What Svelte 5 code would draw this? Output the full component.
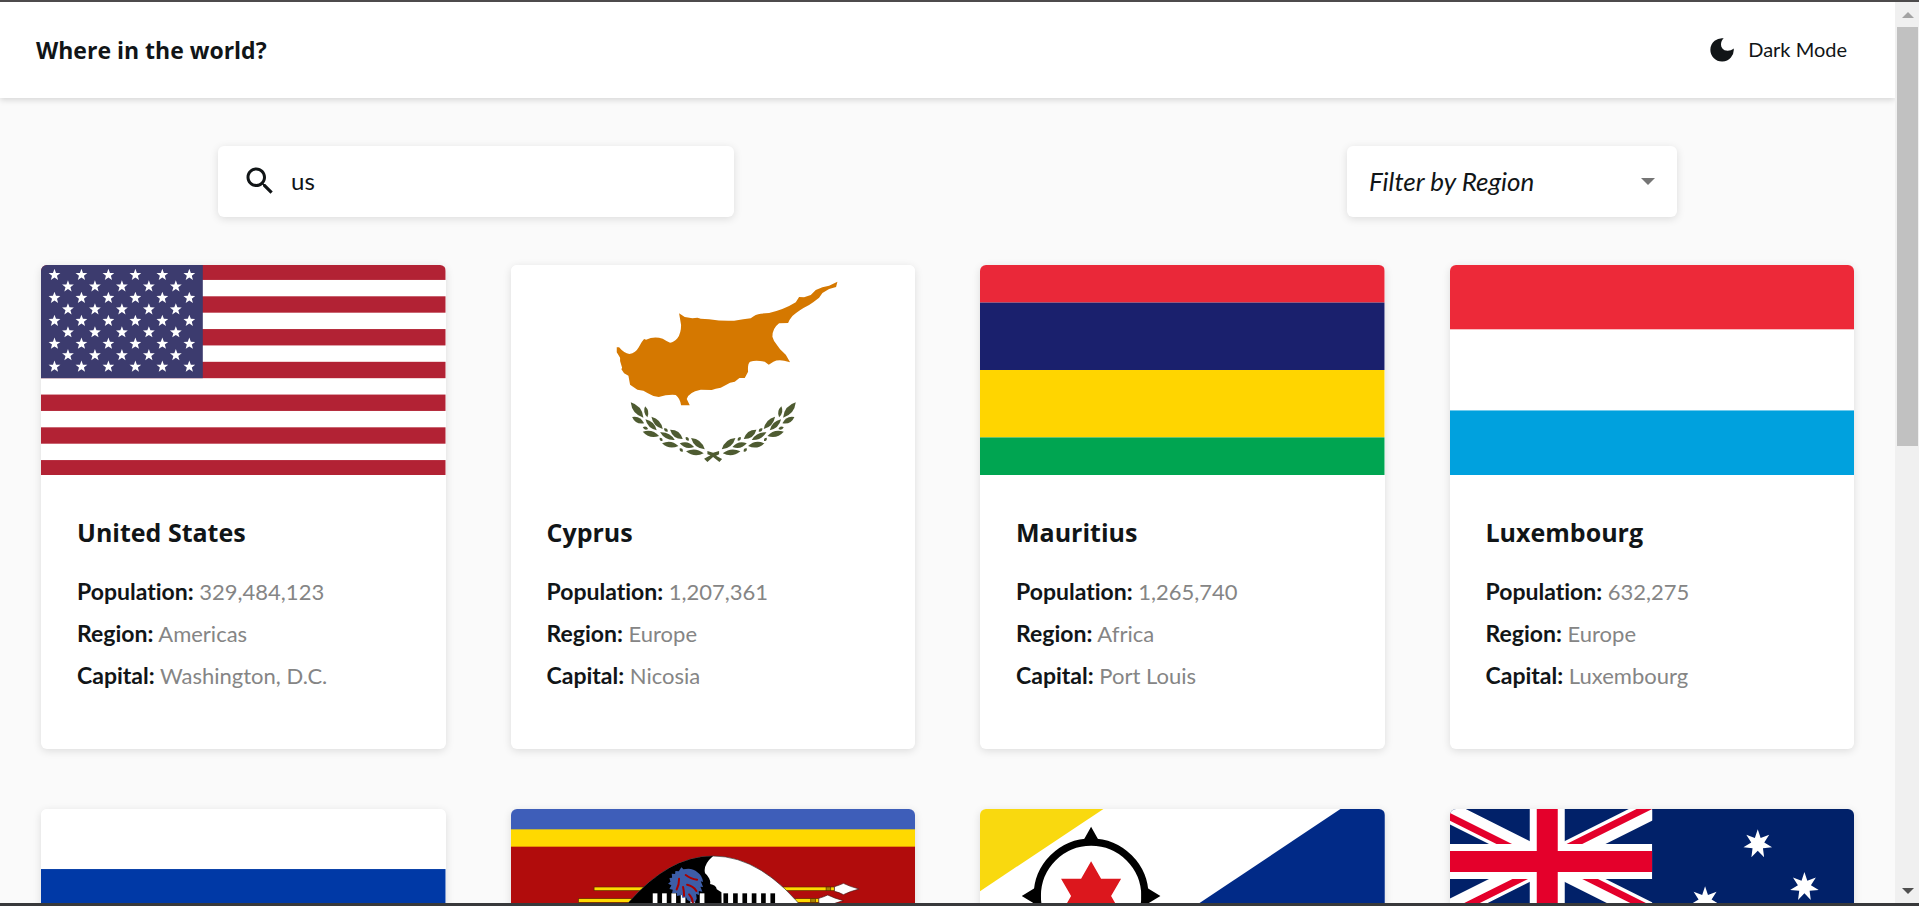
<script>
  let query = $state('us');
  let region = $state('');

  const regions = ['Africa', 'Americas', 'Asia', 'Europe', 'Oceania'];

  const countries = [
    { code: 'us', name: 'United States', details: { population: 329484123, region: 'Americas', capital: 'Washington, D.C.' } },
    { code: 'cy', name: 'Cyprus', details: { population: 1207361, region: 'Europe', capital: 'Nicosia' } },
    { code: 'mu', name: 'Mauritius', details: { population: 1265740, region: 'Africa', capital: 'Port Louis' } },
    { code: 'lu', name: 'Luxembourg', details: { population: 632275, region: 'Europe', capital: 'Luxembourg' } },
    { code: 'ru', name: 'Russia' },
    { code: 'sz', name: 'Eswatini' },
    { code: 'bq', name: 'Caribbean Netherlands' },
    { code: 'au', name: 'Australia' }
  ];

  // Points of a regular star with its first tip straight up.
  function star(cx, cy, outer, inner, tips) {
    const points = [];
    for (let i = 0; i < tips * 2; i++) {
      const r = i % 2 ? inner : outer;
      const a = (Math.PI * i) / tips - Math.PI / 2;
      points.push(`${(cx + r * Math.cos(a)).toFixed(2)},${(cy + r * Math.sin(a)).toFixed(2)}`);
    }
    return points.join(' ');
  }

  // Lens-shaped leaf from one tip to the other.
  function leaf([x1, y1, x2, y2, w]) {
    const len = Math.hypot(x2 - x1, y2 - y1);
    const nx = (-(y2 - y1) / len) * w;
    const ny = ((x2 - x1) / len) * w;
    const mx = (x1 + x2) / 2;
    const my = (y1 + y2) / 2;
    return `M${x1} ${y1}Q${mx + nx} ${my + ny} ${x2} ${y2}Q${mx - nx} ${my - ny} ${x1} ${y1}Z`;
  }

  const usStars = [];
  for (let row = 0; row < 9; row++) {
    const odd = row % 2;
    for (let col = 0; col < (odd ? 5 : 6); col++) {
      usStars.push(star(13.5 + col * 27 + odd * 13.5, 11.48 * (row + 1), 6.2, 2.6, 5));
    }
  }

  const leaves = [
    [390, 442, 428, 488, 20], [394, 486, 430, 505, 16], [433, 454, 440, 487, 12],
    [434, 493, 468, 526, 15], [452, 485, 486, 522, 16], [426, 530, 475, 543, 17],
    [426, 517, 442, 522, 9], [490, 520, 501, 530, 9], [478, 532, 522, 555, 15],
    [508, 524, 546, 552, 18], [477, 548, 485, 558, 8], [484, 565, 533, 573, 17],
    [555, 546, 564, 557, 9], [537, 565, 580, 576, 16], [571, 549, 612, 583, 18],
    [537, 580, 546, 590, 9], [556, 589, 609, 595, 17]
  ];
</script>

{#snippet flag(code)}
  {#if code === 'us'}
    <svg class="flag" viewBox="0 0 405 213.16" preserveAspectRatio="xMidYMid slice" role="img" aria-label="Flag of United States">
      <rect width="405" height="213.16" fill="#fff" />
      {#each [0, 1, 2, 3, 4, 5, 6] as i}
        <rect y={i * 32.794} width="405" height="16.397" fill="#b22234" />
      {/each}
      <rect width="162" height="114.78" fill="#3c3b6e" />
      {#each usStars as points}<polygon {points} fill="#fff" />{/each}
    </svg>
  {:else if code === 'cy'}
    <svg class="flag" viewBox="30 30 1215 630" preserveAspectRatio="xMidYMid slice" role="img" aria-label="Flag of Cyprus">
      <rect x="30" y="30" width="1215" height="630" fill="#fff" />
      <path fill="#d57800" d="M348 277L355 277Q370 295 386 297Q405 294 414 277Q422 260 430 252L436 254Q460 242 486 251Q500 260 508 263Q520 262 530 250Q541 235 541 210L535 175L552 186L575 190L590 188L600 191L625 193Q665 199 700 197Q730 193 750 190Q765 177 780 176L805 174Q850 164 885 142L895 126L910 127L930 120L945 105L965 97L985 92L1010 80L1006 96L985 102L965 114L955 128Q940 140 925 150Q895 165 875 183Q865 195 862 204L835 205Q815 220 815 245L820 258L838 283L855 299L868 322L850 317Q830 314 818 320L804 329L792 320Q765 315 748 320Q740 326 742 350L732 369L716 369L702 380L688 383L660 398L645 401L633 405L600 404Q562 412 558 432L567 451L541 451Q538 430 525 420Q500 418 474 426Q455 424 440 414L428 407L410 404L388 389L383 362L370 355L362 343L364 338L358 318L358 308L348 292Z" />
      <g fill="#4e5b31">
        {#each leaves as l}<path d={leaf(l)} />{/each}
        <g transform="translate(1275 0) scale(-1 1)">
          {#each leaves as l}<path d={leaf(l)} />{/each}
        </g>
        <path d="M620 588L637 593L655 588L655 598L646 602L664 612L656 621L637 606L620 621L610 611L629 601L620 598Z" />
      </g>
    </svg>
  {:else if code === 'mu'}
    <svg class="flag" viewBox="0 0 6 4" preserveAspectRatio="xMidYMid slice" role="img" aria-label="Flag of Mauritius">
      <rect width="6" height="1" fill="#ea2839" />
      <rect y="1" width="6" height="1" fill="#1a206d" />
      <rect y="2" width="6" height="1" fill="#ffd500" />
      <rect y="3" width="6" height="1" fill="#00a551" />
    </svg>
  {:else if code === 'lu'}
    <svg class="flag" viewBox="0 0 5 3" preserveAspectRatio="xMidYMid slice" role="img" aria-label="Flag of Luxembourg">
      <rect width="5" height="1" fill="#ed2939" />
      <rect y="1" width="5" height="1" fill="#fff" />
      <rect y="2" width="5" height="1" fill="#00a1de" />
    </svg>
  {:else if code === 'ru'}
    <svg class="flag" viewBox="0 0 9 6" preserveAspectRatio="xMidYMid slice" role="img" aria-label="Flag of Russia">
      <rect width="9" height="2" fill="#fff" />
      <rect y="2" width="9" height="2" fill="#0039a6" />
      <rect y="4" width="9" height="2" fill="#d52b1e" />
    </svg>
  {:else if code === 'sz'}
    <svg class="flag" viewBox="30 57 1215 630" preserveAspectRatio="xMidYMid slice" role="img" aria-label="Flag of Eswatini">
      <rect x="30" y="57" width="1215" height="630" fill="#3e5eb9" />
      <rect x="30" y="118" width="1215" height="508" fill="#ffd900" />
      <rect x="30" y="170" width="1215" height="404" fill="#b10c0c" />
      <g fill="#ffd900" stroke="#5a2a00" stroke-width="2">
        <rect x="280" y="291" width="722" height="11" />
        <rect x="233" y="326" width="722" height="11" />
        <rect x="280" y="442" width="722" height="11" />
      </g>
      <g fill="#a88400" stroke="#5a2a00" stroke-width="2">
        <rect x="976" y="291" width="14" height="11" />
        <rect x="930" y="326" width="14" height="11" />
      </g>
      <g fill="#fff" stroke="#4a1010" stroke-width="2">
        <path d="M1001 290Q1015 286 1028 280Q1048 290 1075 297Q1048 304 1028 314Q1015 307 1001 304Z" />
        <path d="M954 325Q968 321 981 315Q1001 325 1028 332Q1001 339 981 349Q968 342 954 339Z" />
      </g>
      <path fill="#fff" stroke="#333" stroke-width="2" d="M355 372Q490 198 637 198Q785 198 920 372Q785 546 637 546Q490 546 355 372Z" />
      <path d="M355 372Q490 198 637 198Q606 225 613 250Q620 255 625 265Q630 275 628 282Q646 285 648 298L662 307L664 437L637 546Q490 546 355 372Z" />
      {#each [456, 484, 512, 540, 569, 597] as x}<rect {x} y="310" width="14" height="124" fill="#fff" />{/each}
      {#each [668, 697, 725, 753, 781, 809] as x}<rect {x} y="310" width="14" height="124" />{/each}
      <path fill="#3d5da7" d="M542 232L548 238Q575 232 590 247Q604 256 607 276L600 274L607 291L599 290L605 305L594 303L595 315L586 312L588 326L580 340L572 336L560 330L556 322L545 324L543 315L529 318L528 309L514 309L516 299L506 297L512 286L502 281L509 275L506 264L514 263L513 251L523 252L524 243L534 244Z" />
      <path fill="none" stroke="#a70000" stroke-width="6" stroke-linecap="round" d="M555 255Q570 267 589 269M535 266Q535 285 528 298M559 284Q578 288 587 303M547 291Q550 304 550 317M565 313Q575 323 576 337" />
    </svg>
  {:else if code === 'bq'}
    <svg class="flag" viewBox="30 57 1215 630" preserveAspectRatio="xMidYMid slice" role="img" aria-label="Flag of Caribbean Netherlands">
      <rect x="30" y="57" width="1215" height="630" fill="#fff" />
      <path fill="#f9d90f" d="M30 57H401L30 304Z" />
      <path fill="#012a87" d="M1112 57H1245V687H168Z" />
      <circle cx="364" cy="318" r="161.500" fill="none" stroke="#000" stroke-width="22" />
      <path d="M364 110L385 148H343ZM364 526L385 488H343ZM156 318L194 295Q213 290 213 318Q213 346 194 341ZM572 318L534 295Q515 290 515 318Q515 346 534 341Z" />
      <polygon fill="#dc171d" points={star(364, 318, 104, 60, 6)} />
    </svg>
  {:else}
    <svg class="flag" viewBox="27 57 1215 630" preserveAspectRatio="xMidYMid slice" role="img" aria-label="Flag of Australia">
      <rect x="27" y="57" width="1215" height="630" fill="#012169" />
      <g transform="translate(4.5 57) scale(10.5)">
        <clipPath id="canton"><path d="M0 0H60V30H0Z" /></clipPath>
        <clipPath id="saltire"><path d="M30 15H60V30ZM30 15V30H0ZM30 15H0V0ZM30 15V0H60Z" /></clipPath>
        <g clip-path="url(#canton)">
          <path d="M0 0L60 30M60 0L0 30" stroke="#fff" stroke-width="6" />
          <path d="M0 0L60 30M60 0L0 30" stroke="#e4002b" stroke-width="4" clip-path="url(#saltire)" />
          <path d="M30 0V30M0 15H60" stroke="#fff" stroke-width="10" />
          <path d="M30 0V30M0 15H60" stroke="#e4002b" stroke-width="6" />
        </g>
      </g>
      <g fill="#fff">
        <polygon points={star(951, 162, 44, 20, 7)} />
        <polygon points={star(1091, 290, 44, 20, 7)} />
        <polygon points={star(793, 333, 44, 20, 7)} />
        <polygon points={star(951, 582, 44, 20, 7)} />
        <polygon points={star(1014, 398, 26, 11, 5)} />
        <polygon points={star(319, 530, 95, 42, 7)} />
      </g>
    </svg>
  {/if}
{/snippet}

<div class="window">
  <div class="page">
    <header>
      <h1>Where in the world?</h1>
      <button class="mode" type="button">
        <svg viewBox="0 0 24 24" aria-hidden="true"><path d="M13.700 .3A11.700 11.700 0 1 0 23.700 10.600C20 13.700 14.500 13.500 12.200 10.300C10 7 11 3 13.700 .3Z" /></svg>
        <span>Dark Mode</span>
      </button>
    </header>

    <main>
      <form class="filters" onsubmit={(e) => e.preventDefault()}>
        <label class="search">
          <svg viewBox="0 0 24 24" aria-hidden="true"><path d="M15.500 14h-.79l-.28-.27C15.410 12.590 16 11.110 16 9.500 16 5.910 13.090 3 9.500 3S3 5.910 3 9.500 5.910 16 9.500 16c1.610 0 3.090-.59 4.230-1.570l.27.28v.79l5 4.990L20.490 19l-4.990-5zm-6 0C7.010 14 5 11.990 5 9.500S7.010 5 9.500 5 14 7.010 14 9.500 11.990 14 9.500 14z" /></svg>
          <input type="text" aria-label="Search for a country" bind:value={query} />
        </label>
        <div class="region">
          <select aria-label="Filter by Region" bind:value={region}>
            <option value="">Filter by Region</option>
            {#each regions as name}<option value={name}>{name}</option>{/each}
          </select>
          <svg viewBox="0 0 14 7" aria-hidden="true"><path d="M0 0H14L7 7Z" /></svg>
        </div>
      </form>

      <section class="grid">
        {#each countries as c}
          <article>
            {@render flag(c.code)}
            {#if c.details}
              <div class="info">
                <h2>{c.name}</h2>
                <p><b>Population:</b> {c.details.population.toLocaleString('en-US')}</p>
                <p><b>Region:</b> {c.details.region}</p>
                <p><b>Capital:</b> {c.details.capital}</p>
              </div>
            {/if}
          </article>
        {/each}
      </section>
    </main>
  </div>

  <div class="scrollbar" aria-hidden="true">
    <svg class="up" viewBox="0 0 12 6"><path d="M6 0L12 6H0Z" /></svg>
    <div class="track"><div class="thumb"></div></div>
    <svg class="down" viewBox="0 0 12 6"><path d="M0 0H12L6 6Z" /></svg>
  </div>
</div>

<style>
  :global(body) {
    margin: 0;
    background: #fafafa;
  }

  .window {
    box-sizing: border-box;
    display: flex;
    height: 100vh;
    border-top: 2px solid #4d4b4c;
    border-bottom: 3px solid #38393b;
    color: #111517;
    font-family: Lato, 'Open Sans', sans-serif;
    font-variant-ligatures: none;
  }

  .page {
    flex: 1;
    min-width: 0;
    overflow-y: auto;
    scrollbar-width: none;
  }

  header {
    display: flex;
    align-items: center;
    justify-content: space-between;
    height: 96px;
    padding: 0 48px 0 36px;
    background: #fff;
    box-shadow: 0 2px 6px rgba(0, 0, 0, 0.15);
  }

  h1,
  h2 {
    font-family: 'Open Sans', sans-serif;
    font-weight: 700;
  }

  h1 {
    margin: 0;
    font-size: 23px;
    line-height: 32px;
  }

  .mode {
    display: flex;
    align-items: center;
    gap: 14px;
    padding: 0;
    border: 0;
    background: none;
    color: inherit;
    font: inherit;
    font-size: 20px;
    line-height: 24px;
    cursor: pointer;
  }

  .mode svg {
    width: 24px;
    height: 24px;
    fill: currentColor;
  }

  .mode span {
    padding-bottom: 2px;
  }

  main {
    padding: 48px 41px;
  }

  .filters {
    display: flex;
    justify-content: space-between;
    margin-bottom: 48px;
    padding: 0 177px;
  }

  .search,
  .region,
  article {
    border-radius: 6px;
    background: #fff;
    box-shadow: 0 2px 9px rgba(0, 0, 0, 0.12);
  }

  .search {
    box-sizing: border-box;
    display: flex;
    align-items: center;
    gap: 13px;
    flex: 0 1 516px;
    height: 71px;
    padding: 0 24px 2px;
  }

  .search svg {
    flex: none;
    width: 36px;
    height: 36px;
    fill: currentColor;
  }

  .search input {
    flex: 1;
    min-width: 0;
    padding: 0;
    border: 0;
    outline: 0;
    background: none;
    color: inherit;
    font: inherit;
    font-size: 24px;
  }

  .region {
    position: relative;
    flex: 0 1 330px;
  }

  .region select {
    width: 100%;
    height: 100%;
    padding: 0 48px 2px 22px;
    border: 0;
    border-radius: 6px;
    outline: 0;
    appearance: none;
    background: none;
    color: inherit;
    font: inherit;
    font-size: 26px;
    font-style: italic;
  }

  .region svg {
    position: absolute;
    top: 32px;
    right: 22px;
    width: 14px;
    height: 7px;
    fill: #757575;
    pointer-events: none;
  }

  .grid {
    display: grid;
    grid-template-columns: repeat(4, minmax(0, 1fr));
    gap: 60px 65px;
  }

  article {
    overflow: hidden;
  }

  .flag {
    display: block;
    width: 100%;
    height: 210px;
  }

  .info {
    padding: 40px 36px 57px;
  }

  h2 {
    margin: 0 0 27px;
    font-size: 25px;
    line-height: 34px;
  }

  p {
    margin: 0 0 10px;
    color: #858585;
    font-size: 22px;
    line-height: 32px;
  }

  p:last-child {
    margin-bottom: 0;
  }

  b {
    color: #111517;
    font-size: 23px;
    line-height: 30px;
    font-weight: 700;
  }

  .scrollbar {
    box-sizing: border-box;
    display: flex;
    flex: none;
    flex-direction: column;
    align-items: center;
    width: 24px;
    padding: 10px 1px 9px 2px;
    background: #f0f0f0;
  }

  .scrollbar svg {
    width: 12px;
    height: 6px;
  }

  .up {
    fill: #a3a3a3;
  }

  .down {
    fill: #505050;
  }

  .track {
    flex: 1;
    width: 100%;
    padding: 9px 0;
  }

  .thumb {
    height: 49.200%;
    background: #c1c1c1;
  }
</style>
